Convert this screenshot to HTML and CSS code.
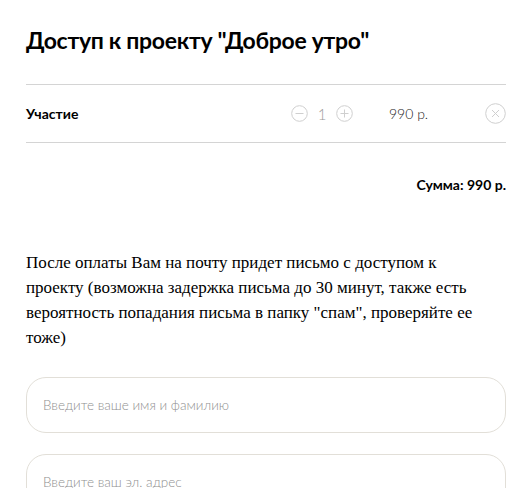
FILE: index.html
```html
<!DOCTYPE html>
<html lang="ru">
<head>
  <meta charset="UTF-8">
  <meta name="viewport" content="width=device-width, initial-scale=1.0">
  <title>Доступ к проекту</title>
  <link rel="stylesheet" href="styles.css">
</head>
<body>
  <div class="cart">
    <h1 class="cart-title">Доступ к проекту "Доброе утро"</h1>

    <div class="cart-products">
      <div class="product-row">
        <div class="product-name">Участие</div>
        <div class="product-qty">
          <span class="qty-btn">
            <svg width="17" height="17" viewBox="0 0 17 17"><circle cx="8.5" cy="8.5" r="7.8" fill="none" stroke="#cfcfcf"/><path d="M4.5 8.5h8" stroke="#cfcfcf"/></svg>
          </span>
          <span class="qty-value">1</span>
          <span class="qty-btn">
            <svg width="17" height="17" viewBox="0 0 17 17"><circle cx="8.5" cy="8.5" r="7.8" fill="none" stroke="#cfcfcf"/><path d="M4.5 8.5h8M8.5 4.5v8" stroke="#cfcfcf"/></svg>
          </span>
        </div>
        <div class="product-price">990 р.</div>
        <div class="product-remove">
          <svg width="21" height="21" viewBox="0 0 21 21"><circle cx="10.5" cy="10.5" r="9.8" fill="none" stroke="#cfcfcf"/><path d="M7 7l7 7M14 7l-7 7" stroke="#cfcfcf"/></svg>
        </div>
      </div>
    </div>

    <div class="cart-total">Сумма: 990 р.</div>

    <p class="cart-note">После оплаты Вам на почту придет письмо с доступом к проекту (возможна задержка письма до 30 минут, также есть вероятность попадания письма в папку "спам", проверяйте ее тоже)</p>

    <div class="cart-form">
      <input class="field" type="text" placeholder="Введите ваше имя и фамилию">
      <input class="field" type="email" placeholder="Введите ваш эл. адрес">
    </div>
  </div>
</body>
</html>
```

FILE: styles.css
```css
:root {
  --text-color: #000000;
  --line-color: #d4d4d4;
  --field-border: #e2dfd8;
  --font-main: 'Lato', 'Noto Sans', Arial, sans-serif;
  --font-text: 'Liberation Serif', Georgia, serif;
}

* {
  margin: 0;
  padding: 0;
  box-sizing: border-box;
}

body {
  background-color: #ffffff;
  color: var(--text-color);
  font-family: var(--font-main);
  width: 532px;
}

.cart {
  padding: 26px 26px 0 26px;
}

.cart-title {
  font-size: 23px;
  font-weight: 700;
  line-height: 28px;
  letter-spacing: -0.3px;
  margin-bottom: 30px;
}

.cart-products {
  border-top: 1px solid var(--line-color);
  border-bottom: 1px solid var(--line-color);
}

.product-row {
  display: flex;
  align-items: center;
  height: 57px;
}

.product-name {
  flex: 1;
  font-size: 14px;
  font-weight: 700;
}

.product-qty {
  display: flex;
  align-items: center;
  margin-right: 36px;
}

.qty-btn {
  display: flex;
  width: 17px;
  height: 17px;
}

.qty-value {
  width: 28px;
  text-align: center;
  font-size: 15px;
  font-weight: 300;
  color: #9a9a9a;
}

.product-price {
  width: 96px;
  font-size: 14px;
  font-weight: 300;
  color: #222;
}

.product-remove {
  display: flex;
  width: 21px;
  height: 21px;
}

.cart-total {
  text-align: right;
  font-size: 14px;
  font-weight: 700;
  padding-top: 33px;
}

.cart-note {
  font-family: var(--font-text);
  font-size: 17px;
  line-height: 25px;
  max-width: 466px;
  margin-top: 57px;
}

.cart-form {
  display: flex;
  flex-direction: column;
  gap: 21px;
  margin-top: 27px;
}

.field {
  height: 56px;
  border: 1px solid var(--field-border);
  border-radius: 20px;
  padding: 0 16px;
  font-family: var(--font-main);
  font-size: 13.5px;
  font-weight: 300;
  outline: none;
}

.field::placeholder {
  color: #8f8f8f;
}
```
